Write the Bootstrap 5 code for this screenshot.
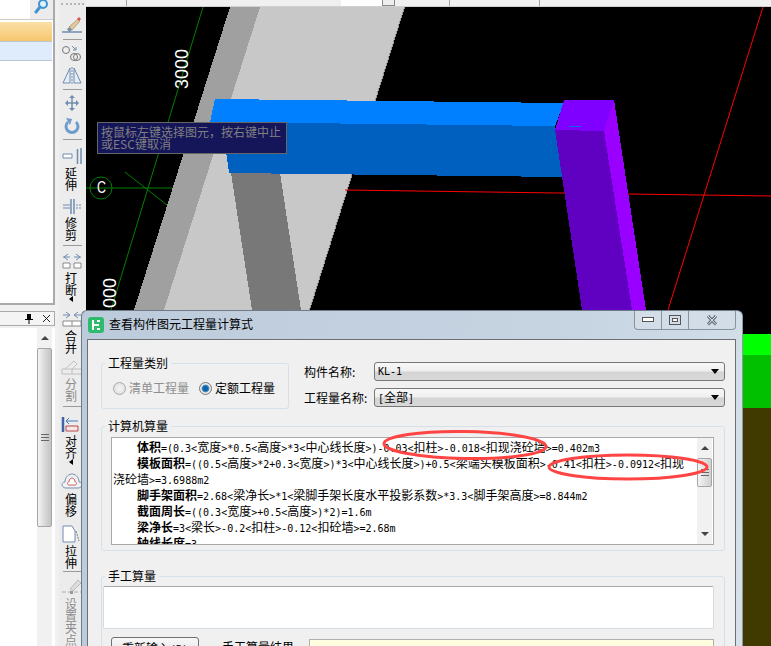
<!DOCTYPE html>
<html lang="zh-CN">
<head>
    <meta charset="UTF-8">
    <meta name="viewport" content="width=device-width, initial-scale=1.0">
    <title>查看构件图元工程量计算式</title>
    <link href="https://cdn.jsdelivr.net/npm/bootstrap@5.3.0/dist/css/bootstrap.min.css" rel="stylesheet">
    <style>
        html, body { height: 646px; overflow: hidden; }
        body { font: 12px/14px "Noto Sans CJK SC", "Liberation Sans", sans-serif; color: #000; background: #f0f0f0; }
        .mono { font-family: "DejaVu Sans Mono", monospace; font-size: 10px; }

        /* left dock */
        .dock { width: 59px; height: 646px; }
        .dock-top { width: 55px; height: 305px; border-right: 2px solid #aaa; border-bottom: 2px solid #aaa; background: #fff; }
        .search-row { height: 20px; background: #ececec; border-bottom: 1px solid #ccc; }
        .search-input { width: 30px; background: #fff; }
        .row-hot { height: 20px; margin-top: 2px; margin-right: 1px; background: linear-gradient(#fbe0a6, #f6c670); border-bottom: 1px solid #b9c6d3; }
        .row-sel { height: 19px; margin-right: 1px; background: #deecfb; border-bottom: 1px solid #b9c6d3; }
        .dock-head { width: 55px; height: 15px; margin-top: 6px; padding-right: 3px; background: #f4f4f4; border: solid #aaa; border-width: 1px 1px 1px 0; }
        .dock-body { width: 55px; flex: 1; margin-top: 2px; background: #fff; }
        .dock-scroll { width: 15px; margin-left: 37px; margin-right: 3px; background: #f1f1f1; }
        .dock-thumb { height: 179px; margin-top: 8px; background: linear-gradient(90deg, #f4f4f4, #d4d4d4 60%, #c4c4c4); border: 1px solid #a5a5a5; border-radius: 2px; }

        /* toolbar */
        .toolbar { width: 27px; height: 646px; background: #ececec; }
        .grip { height: 11px; margin: 3px 2px 0; border-top: 2px dotted #b5b5b5; }
        .tool { padding-top: 3px; }
        .tool-t0 { padding-top: 0; }
        .tool-t1 { padding-top: 1px; }
        .tool-t2 { padding-top: 2px; }
        .tool-t4 { padding-top: 4px; }
        .tool-t5 { padding-top: 5px; }
        .tool-icon { height: 23px; margin-left: 2px; }
        .tool-label { width: 12px; line-height: 12px; margin-left: 6px; word-break: break-all; }
        .tool-off { color: #8c8c8c; }
        .tool-more { height: 6px; margin-left: 10px; }
        .tool-sep { width: 19px; height: 1px; margin: 2px 0 1px 4px; background: #9a9a9a; }
        .tool-sep-b { margin-top: 4px; }
        .tool-sep-c { margin-top: 4px; }

        /* main area */
        .topbar { height: 7px; background: #f0f0f0; border-bottom: 1px solid #d0d0d0; }
        .topbar-a { width: 41px; border-right: 1px solid #a0a0a0; }
        .topbar-b { width: 214px; }
        .topbar-white { width: 41px; background: #fff; }
        .topbar-box { width: 13px; border: 1px solid #888; border-top: 0; background: #eee; }
        .topbar-c { width: 55px; border-right: 1px solid #a0a0a0; }
        .topbar-d { width: 90px; border-right: 1px solid #a0a0a0; }
        .scene { display: block; background: #000; }
        .hint { position: absolute; left: 97px; top: 122px; width: 190px; height: 32px; padding: 3px 3px; background: #15155a; border: 1px solid #666; color: #808080; line-height: 12px; }

        /* dialog */
        .dlg { position: absolute; left: 81px; top: 310px; width: 662px; height: 336px; overflow: hidden; background: linear-gradient(100deg, #bccbdb, #c7d4e2 70%, #d6e1ea); border: 1px solid #6d7a87; border-bottom: 0; border-right-color: #8d99a5; border-radius: 6px 6px 0 0; }
        .dlg-title { height: 28px; padding-left: 6px; }
        .dlg-logo { margin-top: 6px; }
        .dlg-name { margin: 6px 0 0 5px; }
        .dlg-btns { height: 19px; margin-right: 6px; border: 1px solid #87939f; border-top: 0; border-radius: 0 0 4px 4px; background: #d3dde7; }
        .dlg-btn { width: 27px; height: 18px; border-right: 1px solid #87939f; }
        .dlg-btn-x { width: 46px; border-right: 0; }
        .dlg-client { margin: 0 6px 0 5px; height: 310px; padding: 16px 10px 0 13px; background: #f0f0f0; border: 1px solid #6c7075; border-bottom: 0; }
        .grp { margin: 0; padding: 0; border: 1px solid #d6e0e8; border-radius: 3px; }
        .grp legend { float: none; width: auto; margin: 0 0 0 3px; padding: 0 3px; font-size: 12px; line-height: 14px; }
        .grp-type { width: 188px; height: 53px; flex-shrink: 0; }
        .radio-row { padding: 11px 0 0 11px; }
        .radio-dot { width: 13px; height: 13px; margin-right: 3px; border-radius: 50%; border: 1px solid #a9a9a9; background: radial-gradient(#f4f4f4, #dcdcdc); }
        .radio-on { border-color: #777; background: radial-gradient(#0a66b0 30%, #5d93bd 45%, #e8e8e8 55%); }
        .radio-off-text { margin-right: 10px; color: #8d8d8d; }
        .fields { padding: 6px 0 0 15px; }
        .field-row { height: 19px; }
        .field-row + .field-row { margin-top: 7px; }
        .field-label { width: 70px; }
        .combo { height: 19px; padding: 0 5px 0 3px; border: 1px solid #777; border-radius: 3px; background: linear-gradient(#f8f8f8, #efefef 48%, #d4d4d4 52%, #d8d8d8); line-height: 17px; }
        .combo-arrow { border-left: 4px solid transparent; border-right: 4px solid transparent; border-top: 5px solid #000; }
        .grp-calc { height: 132px; margin-top: 10px; padding: 0 10px 0 9px; }
        .grp-calc legend { margin-left: -6px; }
        .calc-box { margin-top: 4px; height: 108px; background: #fff; border: 1px solid #a9a9a9; overflow: hidden; }
        .calc-text { padding: 1px 0 0 1px; line-height: 16px; white-space: nowrap; overflow: hidden; }
        .calc-line { height: 16px; }
        .calc-first { padding-left: 24px; }
        .calc-scroll { width: 15px; margin-right: 1px; flex-shrink: 0; background: #f1f1f1; }
        .calc-thumb { height: 29px; margin-top: 8px; background: linear-gradient(90deg, #f4f4f4, #d0d0d0); border: 1px solid #a5a5a5; border-radius: 2px; }
        .dn-gap { margin-top: 45px; }
        .arrow-up { border-left: 4px solid transparent; border-right: 4px solid transparent; border-bottom: 4px solid #444; }
        .arrow-dn { border-left: 4px solid transparent; border-right: 4px solid transparent; border-top: 4px solid #444; }
        .grp-hand { margin-top: 18px; height: 90px; padding: 3px 10px 0 1px; }
        .grp-hand legend { margin-left: 2px; }
        .hand-input { height: 43px; background: #fff; border: 1px solid #d3dae0; border-top-color: #a9a9a9; border-radius: 2px; }
        .hand-row { padding: 8px 0 0 8px; }
        .hand-btn { width: 88px; height: 24px; padding: 2px 0; margin-right: 23px; flex-shrink: 0; font-size: 12px; line-height: 14px; color: #000; background: linear-gradient(#f8f8f8, #ddd); border: 1px solid #707070; border-radius: 3px; }
        .hand-label { width: 87px; padding-top: 3px; flex-shrink: 0; }
        .hand-out { height: 24px; margin-top: 2px; background: #ffffe0; border: 1px solid #b0b0b0; }
        .marks { position: absolute; left: -1px; top: -1px; pointer-events: none; }
    </style>
</head>
<body class="position-relative">
    <div class="d-flex">
        <!-- left dock -->
        <div class="dock d-flex flex-column">
            <div class="dock-top">
                <div class="search-row d-flex">
                    <div class="search-input"></div>
                    <svg class="ms-1" width="18" height="14" viewBox="0 0 18 14"><circle cx="9" cy="4" r="4" fill="#dff0fb" stroke="#3f93cf" stroke-width="2"/><path d="M6 7 2 12" stroke="#3f93cf" stroke-width="3" stroke-linecap="round"/></svg>
                </div>
                <div class="row-hot"></div>
                <div class="row-sel"></div>
            </div>
            <div class="dock-head d-flex align-items-center justify-content-end gap-2">
                <svg width="10" height="11" viewBox="0 0 10 11"><path d="M3 1h4v5h2v1H1V6h2zM4.500 7h1v4h-1z" fill="#000"/></svg>
                <svg width="9" height="9" viewBox="0 0 9 9"><path d="m1 1 7 7M8 1 1 8" stroke="#222" fill="none"/></svg>
            </div>
            <div class="dock-body d-flex">
                <div class="dock-scroll">
                    <div class="d-flex justify-content-center pt-2"><div class="arrow-up"></div></div>
                    <div class="dock-thumb d-flex align-items-center justify-content-center">
                        <svg width="8" height="7" viewBox="0 0 8 7"><path d="M0 .5h8M0 3.500h8M0 6.500h8" stroke="#666"/></svg>
                    </div>
                </div>
            </div>
        </div>

        <!-- vertical toolbar -->
        <div class="toolbar">
            <div class="grip"></div>
            <div class="tool tool-t0"><div class="tool-icon d-flex align-items-center">
                <svg width="22" height="20" viewBox="0 0 22 20"><path d="M8 11 17 3l2 2-8 9z" fill="#e9c98d" stroke="#8b8b8b" stroke-width=".7"/><path d="M16 3l2-2 2 2-2 2z" fill="#d9534f"/><path d="M6 13l3-2 2 3-3 2z" fill="#7a8ea8"/><path d="M1 16h20" stroke="#6f8cb0" stroke-width="1.500"/></svg>
            </div></div>
            <div class="tool-sep"></div>
            <div class="tool tool-t0"><div class="tool-icon d-flex align-items-center">
                <svg width="22" height="20" viewBox="0 0 22 20"><circle cx="5" cy="7" r="3.500" fill="#eee" stroke="#777"/><circle cx="13" cy="14" r="3.500" fill="#eee" stroke="#777"/><circle cx="16" cy="14" r="3.500" fill="none" stroke="#777"/><path d="m11 3 4 4M15 4v3h-3" stroke="#6f8cb0" fill="none"/></svg>
            </div></div>
            <div class="tool tool-t0"><div class="tool-icon d-flex align-items-center">
                <svg width="22" height="20" viewBox="0 0 22 20"><path d="M9 2v15H2zM13 2v15h7z" fill="#e5edf6" stroke="#6f8cb0"/><path d="M11 1v17" stroke="#6f8cb0" stroke-dasharray="2 1"/></svg>
            </div></div>
            <div class="tool-sep"></div>
            <div class="tool tool-t0"><div class="tool-icon d-flex align-items-center">
                <svg width="22" height="20" viewBox="0 0 22 20"><path d="M11 3v14M5 10h12" stroke="#6f8cb0" stroke-width="1.500"/><path d="m11 2 3 3H8zM11 18l3-3H8zM4 10l3-3v6zM18 10l-3-3v6z" fill="#6f8cb0"/></svg>
            </div></div>
            <div class="tool tool-t0"><div class="tool-icon d-flex align-items-center">
                <svg width="22" height="20" viewBox="0 0 22 20"><path d="M7 6a6 6 0 1 0 8 0" fill="none" stroke="#6d9ccb" stroke-width="3"/><path d="M5 2l6 1-2 6z" fill="#6d9ccb"/></svg>
            </div></div>
            <div class="tool-sep"></div>
            <div class="tool"><div class="tool-icon d-flex align-items-center">
                <svg width="22" height="20" viewBox="0 0 22 20"><path d="M2 8h9v4H2z" fill="#fff" stroke="#6f8cb0"/><path d="M16.500 3v15M20 2v16" stroke="#6f8cb0" stroke-width="1.500"/></svg>
            </div><div class="tool-label">延伸</div></div>
            <div class="tool"><div class="tool-icon d-flex align-items-center">
                <svg width="22" height="20" viewBox="0 0 22 20"><path d="M10 3v15M13 3v15" stroke="#6f8cb0" stroke-width="1.500"/><path d="M2 9h7M2 12h7" stroke="#6f8cb0"/><path d="M15 9h5M15 12h5" stroke="#6f8cb0" stroke-dasharray="2 1"/></svg>
            </div><div class="tool-label">修剪</div></div>
            <div class="tool-sep tool-sep-b"></div>
            <div class="tool tool-t2"><div class="tool-icon d-flex align-items-center">
                <svg width="22" height="20" viewBox="0 0 22 20"><path d="M2 6h7M20 6h-7M7 3 3 6l4 3M15 3l4 3-4 3" fill="none" stroke="#6f8cb0"/><path d="M2 12h7v5H2zM13 12h7v5h-7z" fill="#fff" stroke="#8a8a8a"/></svg>
            </div><div class="tool-label">打断</div><svg class="tool-more d-block" viewBox="0 0 4 6" width="4"><path d="M4 0v6L0 3z"/></svg></div>
            <div class="tool tool-t5"><div class="tool-icon d-flex align-items-center">
                <svg width="22" height="20" viewBox="0 0 22 20"><path d="M2 6h6M20 6h-6M5 3l4 3-4 3M17 3l-4 3 4 3" fill="none" stroke="#6f8cb0"/><path d="M2 12h18v5H2zM11 12v5" fill="#fff" stroke="#8a8a8a"/></svg>
            </div><div class="tool-label">合并</div></div>
            <div class="tool tool-t1 tool-off"><div class="tool-icon d-flex align-items-center">
                <svg width="22" height="20" viewBox="0 0 22 20"><path d="M1 12h20v5H1zM11 12v5M4 12l9-8 3 3-5 5" fill="none" stroke="#c0c0c0"/></svg>
            </div><div class="tool-label">分割</div></div>
            <div class="tool-sep tool-sep-c"></div>
            <div class="tool tool-t4"><div class="tool-icon d-flex align-items-center">
                <svg width="22" height="20" viewBox="0 0 22 20"><path d="M2 3v15" stroke="#3f63a3" stroke-width="2.500"/><path d="M5 7h12M8 4 5 7l3 3" fill="none" stroke="#3f7fc0"/><path d="M5 12h12v5H5z" fill="#f3e7e7" stroke="#b84a4a"/></svg>
            </div><div class="tool-label">对齐</div><svg class="tool-more d-block" viewBox="0 0 4 6" width="4"><path d="M4 0v6L0 3z"/></svg></div>
            <div class="tool tool-t5"><div class="tool-icon d-flex align-items-center">
                <svg width="22" height="20" viewBox="0 0 22 20"><path d="M5 16c-5 0-5-6-1-6 0-6 5-8 7-8s7 2 7 8c4 0 4 6-1 6z" fill="#eef2f7" stroke="#7c8fa8"/><path d="M8 13c-2 0-2-3 0-3 0-3 2-4 3-4s3 1 3 4c2 0 2 3 0 3z" fill="#fff" stroke="#d0605a"/></svg>
            </div><div class="tool-label">偏移</div></div>
            <div class="tool tool-t5"><div class="tool-icon d-flex align-items-center">
                <svg width="22" height="20" viewBox="0 0 22 20"><path d="M2 2h9l3 5v11H2z" fill="#fff" stroke="#6f8cb0"/><path d="m15 7 3 10" stroke="#777" stroke-dasharray="2 1"/></svg>
            </div><div class="tool-label">拉伸</div></div>
            <div class="tool-sep"></div>
            <div class="tool tool-t2 tool-off"><div class="tool-icon d-flex align-items-center">
                <svg width="22" height="20" viewBox="0 0 22 20"><path d="M9 12 17 3l3 3-8 8z" fill="#ddd" stroke="#bbb"/><path d="M1 15h20" stroke="#aaa" stroke-dasharray="4 2"/><path d="M9 14h3v3H9z" fill="#999"/></svg>
            </div><div class="tool-label">设置夹点</div></div>
        </div>

        <!-- top strip and drawing -->
        <div class="flex-grow-1 d-flex flex-column">
            <div class="topbar d-flex">
                <div class="topbar-a"></div>
                <div class="topbar-b"></div>
                <div class="topbar-white"></div>
                <div class="topbar-box"></div>
                <div class="topbar-c"></div>
                <div class="topbar-d"></div>
            </div>
            <svg class="scene" width="685" height="639" viewBox="86 7 685 639">
                <g shape-rendering="crispEdges">
                    <polygon points="260,7 404,7 309,310 164,310" fill="#c8c8c8"/>
                    <polygon points="230,7 260,7 164,310 134,310" fill="#a0a0a0"/>
                    <polygon points="404,7 405,7 310,310 309,310" fill="#999"/>
                    <polygon points="231,173 280,173 301,310 252,310" fill="#787878"/>
                    <polygon points="222,122 555,126 562,177 229,173" fill="#0060c0"/>
                    <polygon points="215,99 564,103 555,126 210,122" fill="#0080ff"/>
                </g>
                <path d="M345 190 771 196" stroke="#f00" fill="none"/>
                <g shape-rendering="crispEdges">
                    <polygon points="555,130 604,131 632,310 582,310" fill="#6000c0"/>
                    <polygon points="614,100 604,131 632,310 646,310" fill="#9900ff"/>
                    <polygon points="564,100 614,100 604,131 555,130" fill="#8000ff"/>
                    <rect x="569" y="126" width="12" height="1" fill="#0070e0"/>
                    <rect x="743" y="334" width="28" height="21" fill="#00ff00"/>
                    <rect x="743" y="355" width="28" height="53" fill="#00c000"/>
                    <rect x="743" y="408" width="28" height="238" fill="#403a00"/>
                </g>
                <path d="M763 7 668 310" stroke="#f00" fill="none"/>
                <path d="M203 7 111 310" stroke="#008000" fill="none"/>
                <path d="M85 188H172M125 172 167 205" stroke="#008000" fill="none"/>
                <circle cx="101" cy="188" r="11" fill="#000" stroke="#008000"/>
                <path d="M90 188H112" stroke="#008000"/>
                <text x="97" y="193" font-family="Liberation Sans" font-size="17" fill="#fff" textLength="9" lengthAdjust="spacingAndGlyphs">C</text>
                <text transform="translate(188 89) rotate(-90)" font-family="Liberation Sans" font-size="18" fill="#fff">3000</text>
                <text transform="translate(116 308) rotate(-90)" font-family="Liberation Sans" font-size="18" fill="#fff">000</text>
            </svg>
        </div>
    </div>

    <div class="hint">按鼠标左键选择图元，按右键中止<br>或ESC键取消</div>

    <!-- dialog window -->
    <div class="dlg">
        <div class="dlg-title d-flex">
            <svg class="dlg-logo" width="16" height="16" viewBox="0 0 16 16"><rect width="16" height="16" rx="3" fill="#2dbb6c"/><path d="M5 3v10M5 8h6M9 4h3M9 12h3" stroke="#fff" stroke-width="2" fill="none"/></svg>
            <div class="dlg-name">查看构件图元工程量计算式</div>
            <div class="dlg-btns d-flex ms-auto">
                <div class="dlg-btn d-flex align-items-center justify-content-center">
                    <svg width="12" height="6" viewBox="0 0 12 6"><rect x=".5" y=".5" width="11" height="4" fill="#fff" stroke="#555"/></svg>
                </div>
                <div class="dlg-btn d-flex align-items-center justify-content-center">
                    <svg width="12" height="11" viewBox="0 0 12 11"><rect x=".5" y=".5" width="11" height="9" fill="none" stroke="#555"/><rect x="3.500" y="3.500" width="5" height="3" fill="#fff" stroke="#555"/></svg>
                </div>
                <div class="dlg-btn dlg-btn-x d-flex align-items-center justify-content-center">
                    <svg width="12" height="11" viewBox="0 0 12 11"><path d="m2 1 8 8.500M10 1 2 9.500" stroke="#5a6470" stroke-width="3"/><path d="m2 1 8 8.500M10 1 2 9.500" stroke="#fff"/></svg>
                </div>
            </div>
        </div>
        <div class="dlg-client">
            <div class="d-flex">
                <fieldset class="grp grp-type">
                    <legend>工程量类别</legend>
                    <div class="radio-row d-flex align-items-center">
                        <span class="radio-dot"></span><span class="radio-off-text">清单工程量</span>
                        <span class="radio-dot radio-on"></span><span>定额工程量</span>
                    </div>
                </fieldset>
                <div class="fields flex-grow-1">
                    <div class="field-row d-flex align-items-center">
                        <div class="field-label">构件名称:</div>
                        <div class="combo flex-grow-1 d-flex align-items-center justify-content-between"><span class="mono">KL-1</span><span class="combo-arrow"></span></div>
                    </div>
                    <div class="field-row d-flex align-items-center">
                        <div class="field-label">工程量名称:</div>
                        <div class="combo flex-grow-1 d-flex align-items-center justify-content-between"><span><span class="mono">[</span>全部<span class="mono">]</span></span><span class="combo-arrow"></span></div>
                    </div>
                </div>
            </div>
            <fieldset class="grp grp-calc">
                <legend>计算机算量</legend>
                <div class="calc-box d-flex">
                    <div id="calcText" class="calc-text flex-grow-1"></div>
                    <div class="calc-scroll">
                        <div class="d-flex justify-content-center pt-2"><div class="arrow-up"></div></div>
                        <div class="calc-thumb d-flex align-items-center justify-content-center">
                            <svg width="8" height="7" viewBox="0 0 8 7"><path d="M0 .5h8M0 3.500h8M0 6.500h8" stroke="#666"/></svg>
                        </div>
                        <div class="d-flex justify-content-center dn-gap"><div class="arrow-dn"></div></div>
                    </div>
                </div>
            </fieldset>
            <fieldset class="grp grp-hand">
                <legend>手工算量</legend>
                <div class="hand-input"></div>
                <div class="hand-row d-flex">
                    <button type="button" class="btn hand-btn">重新输入<span class="mono">(R)</span></button>
                    <div class="hand-label">手工算量结果</div>
                    <div class="hand-out flex-grow-1"></div>
                </div>
            </fieldset>
        </div>
        <svg class="marks" width="662" height="336" viewBox="81 310 662 336" fill="none" stroke="#ff4444" stroke-width="3">
            <ellipse cx="465" cy="445" rx="81" ry="13.500" transform="rotate(1 465 445)"/>
            <ellipse cx="628" cy="467" rx="79" ry="12"/>
        </svg>
    </div>

    <script>
        const lines = [
            ['体积', '=(0.3<宽度>*0.5<高度>*3<中心线长度>)-0.03<扣柱>-0.018<扣现浇砼墙>=0.402m3'],
            ['模板面积', '=((0.5<高度>*2+0.3<宽度>)*3<中心线长度>)+0.5<梁端头模板面积>-0.41<扣柱>-0.0912<扣现'],
            ['', '浇砼墙>=3.6988m2'],
            ['脚手架面积', '=2.68<梁净长>*1<梁脚手架长度水平投影系数>*3.3<脚手架高度>=8.844m2'],
            ['截面周长', '=((0.3<宽度>+0.5<高度>)*2)=1.6m'],
            ['梁净长', '=3<梁长>-0.2<扣柱>-0.12<扣砼墙>=2.68m'],
            ['轴线长度', '=3']
        ];
        const esc = s => s.replace(/</g, '&lt;').replace(/>/g, '&gt;');
        document.getElementById('calcText').innerHTML = lines.map(([label, body]) => {
            const text = body.replace(/[\x20-\x7e]+/g, m => `<span class="mono">${esc(m)}</span>`);
            return `<div class="calc-line ${label ? 'calc-first' : ''}"><b>${label}</b>${text}</div>`;
        }).join('');
    </script>
    <script src="https://cdn.jsdelivr.net/npm/bootstrap@5.3.0/dist/js/bootstrap.bundle.min.js"></script>
</body>
</html>
